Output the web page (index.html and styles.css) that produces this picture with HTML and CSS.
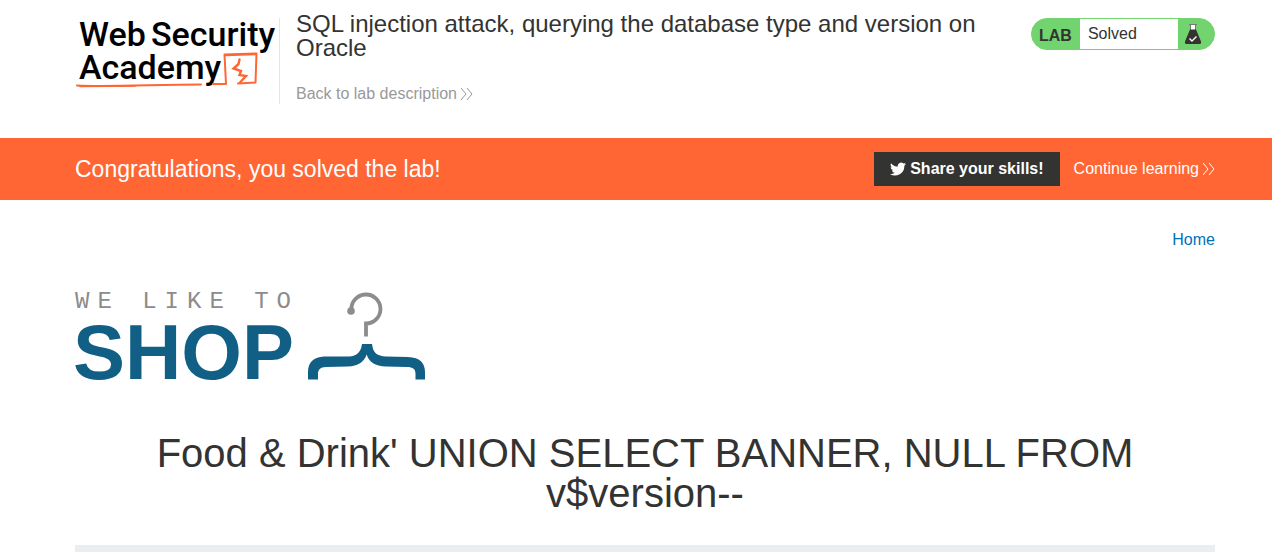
FILE: index.html
```html
<!DOCTYPE html>
<html lang="en">
<head>
<meta charset="utf-8">
<meta name="viewport" content="width=device-width, initial-scale=1">
<title>SQL injection attack, querying the database type and version on Oracle</title>
<link rel="stylesheet" href="styles.css">
</head>
<body>
<header class="lab-header wrap">
  <a class="academy-logo" href="#" aria-label="Web Security Academy">
    <svg width="204" height="76" viewBox="0 0 204 76">
      <g class="academy-name">
        <text x="4" y="28">Web</text>
        <text x="76" y="28">Security</text>
        <text x="4" y="61">Academy</text>
      </g>
      <g fill="none" stroke="#ff6633" stroke-linejoin="round" stroke-linecap="round">
        <path stroke-width="2" d="M2 67.500C28 69 72 67 126 66.500M138 66L151 66L149.500 36.500L181.500 35.500L180.500 64.500L163 65.500"/>
        <path stroke-width="1.500" d="M5 68.500L60 68M150 37.500L181 36.500"/>
        <path stroke-width="2.400" stroke-linejoin="miter" d="M164.500 41.500L163.500 46L158.500 50.500L166 53L164.500 57L171 58L165 64.500"/>
      </g>
    </svg>
  </a>
  <div class="lab-title">
    <h2>SQL injection attack, querying the database type and version on Oracle</h2>
    <a class="chevron-link back" href="#">Back to lab description
      <svg width="12" height="14" viewBox="0 0 12 14"><path d="M0 1L5 7L0 13M6 1L11 7L6 13"/></svg>
    </a>
  </div>
  <div class="lab-status">
    <span class="tag">LAB</span>
    <p>Solved</p>
    <svg width="36" height="30" viewBox="0 0 36 30" aria-hidden="true">
      <path d="M12 6H18V11H12Z" fill="#fff"/>
      <path d="M11 5.500H19" stroke="#777" stroke-width="1"/>
      <path d="M12.500 6V11M17.500 6V11" stroke="#777" stroke-width="1"/>
      <path d="M12 10.500H18L23 22.500Q23.500 25 21.500 25H8.500Q6.500 25 7 22.500Z" fill="#333332"/>
      <path d="M11.500 19.500L14 22L18.500 17.500" fill="none" stroke="#fff" stroke-width="1.400"/>
    </svg>
  </div>
</header>
<section class="notification">
  <div class="wrap notification-row">
    <h4>Congratulations, you solved the lab!</h4>
    <button class="share" type="button">
      <svg width="16" height="16" viewBox="0 0 24 24" aria-hidden="true"><path fill="#fff" d="M24 4.600a10 10 0 0 1-2.800.8 4.900 4.900 0 0 0 2.100-2.700c-1 .6-2 1-3.100 1.200a4.900 4.900 0 0 0-8.400 4.500A14 14 0 0 1 1.700 3.200a4.900 4.900 0 0 0 1.500 6.500c-.8 0-1.600-.2-2.200-.6a4.900 4.900 0 0 0 3.900 4.900c-.7.2-1.500.2-2.200.1a4.900 4.900 0 0 0 4.600 3.400A9.900 9.900 0 0 1 0 19.500a14 14 0 0 0 21.500-12.400A10 10 0 0 0 24 4.600z"/></svg>
      Share your skills!
    </button>
    <a class="chevron-link continue" href="#">Continue learning
      <svg width="12" height="14" viewBox="0 0 12 14"><path d="M0 1L5 7L0 13M6 1L11 7L6 13"/></svg>
    </a>
  </div>
</section>
<main class="wrap">
  <nav class="top-links"><a href="#">Home</a></nav>
  <svg class="shop-logo" width="352" height="92" viewBox="0 0 352 92" role="img" aria-label="We like to shop">
    <text class="shop-tagline" x="0" y="17">WE LIKE TO</text>
    <text class="shop-name" x="-2" y="88">SHOP</text>
    <path d="M276.500 19A14.500 14.500 0 1 1 291 32.500V45.500" fill="none" stroke="#8c8c8c" stroke-width="3.800"/>
    <circle cx="276" cy="20" r="3.800" fill="#8c8c8c"/>
    <path fill="#115f85" d="M287 53H297C298 62 302 65 311 65.500L333 66C345 66.500 350 72 350 81V88.500H340.500V83C340.500 78 338 76 332 76L311 75.500C300 75 294 71 291.700 63.500C289 71 283 75 273 75.500L251 76C245 76 243 79 243 83V88.500H233V81C233 71 239 66 249 65.500L274 65.500C282 65 286 61 287 53Z"/>
  </svg>
  <h1>Food &amp; Drink' UNION SELECT BANNER, NULL FROM v$version--</h1>
  <section class="search-filters"></section>
</main>
</body>
</html>
```
FILE: styles.css
```css
* {
  box-sizing: border-box;
}

body {
  margin: 0;
  font-family: "Liberation Sans", Arial, sans-serif;
  font-size: 16px;
  line-height: 20px;
  color: #333332;
  background: #fff;
}

h1, h2, h4, p {
  margin: 0;
  font-weight: 400;
}

a {
  color: #0071b8;
  text-decoration: none;
}

svg {
  display: block;
}

.wrap {
  padding-left: 75px;
  padding-right: 57px;
}

.lab-header {
  display: flex;
  align-items: flex-start;
  padding-top: 18px;
  padding-bottom: 34px;
}

.academy-logo {
  flex: none;
}

.academy-name {
  font-family: Roboto, sans-serif;
  font-size: 34px;
  font-weight: 500;
  fill: #000;
}

.academy-logo svg {
  overflow: visible;
}

.lab-title {
  flex: 1;
  border-left: 1px solid #e5e5e5;
  padding-left: 16px;
  padding-right: 48px;
  min-height: 86px;
}

.lab-title h2 {
  font-size: 24px;
  line-height: 24px;
  margin-top: -6px;
  margin-bottom: 24px;
}

.chevron-link {
  display: inline-flex;
  align-items: center;
  gap: 4px;
}

.chevron-link path {
  fill: none;
  stroke: currentColor;
  stroke-width: 1;
}

.back {
  color: #999;
}

.lab-status {
  flex: none;
  display: flex;
  width: 184px;
  height: 32px;
  border: 1px solid #72d46e;
  border-radius: 16px;
  overflow: hidden;
  background: #72d46e;
  line-height: 30px;
}

.tag {
  padding: 2px 8px 0 7px;
  font-weight: 700;
}

.lab-status p {
  flex: 1;
  padding-left: 8px;
  background: #fff;
}

.notification {
  background: #ff6633;
  color: #fff;
}

.notification-row {
  display: flex;
  align-items: center;
  min-height: 62px;
}

.notification h4 {
  flex: 1;
  font-size: 23px;
  line-height: 24px;
}

.share {
  display: flex;
  align-items: center;
  gap: 4px;
  height: 34px;
  padding: 0 16px;
  border: 0;
  background: #333332;
  color: #fff;
  font: inherit;
  font-weight: 700;
}

.continue {
  margin-left: 14px;
  color: #fff;
}

.top-links {
  display: flex;
  justify-content: flex-end;
  padding-top: 30px;
}

.shop-logo {
  margin-top: 41px;
  overflow: visible;
}

.shop-tagline {
  font-family: "Liberation Mono", monospace;
  font-size: 24px;
  letter-spacing: 8px;
  fill: #8c8c8c;
}

.shop-name {
  font-size: 78px;
  font-weight: 700;
  fill: #115f85;
}

h1 {
  margin-top: 50px;
  font-size: 40px;
  line-height: 40px;
  text-align: center;
}

.search-filters {
  min-height: 7px;
  margin-top: 32px;
  background: #eaeef2;
}
```
